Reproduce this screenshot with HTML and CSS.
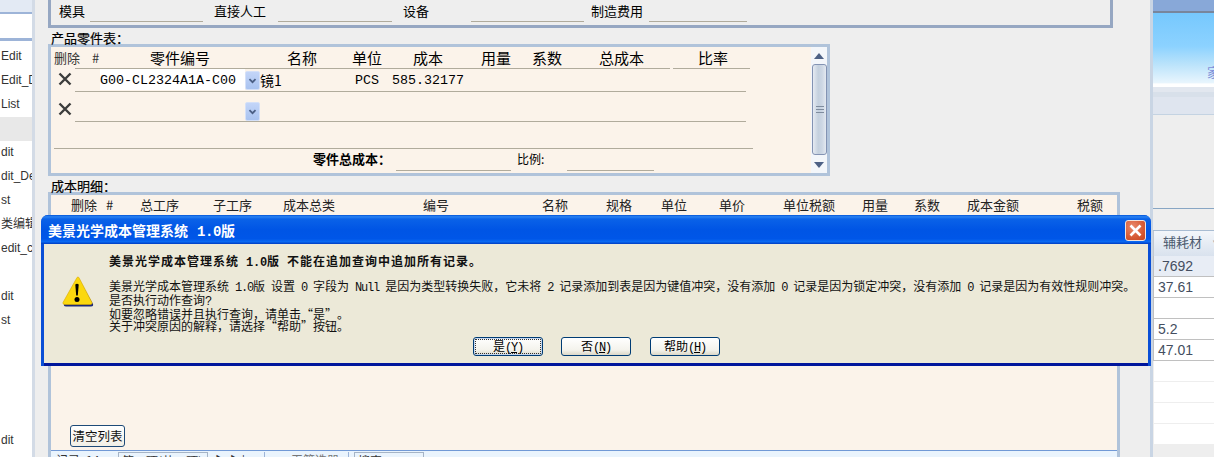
FILE: index.html
```html
<!DOCTYPE html>
<html lang="zh-CN">
<head>
<meta charset="utf-8">
<title>美景光学成本管理系统</title>
<link rel="stylesheet" href="styles.css">
</head>
<body>
<div class="page">
  <nav class="nav">
    <div class="nav-top"></div>
    <div class="nav-band"></div>
    <ul class="nav-list">
      <li>Edit</li><li>Edit_D</li><li>List</li><li class="sel"></li><li>dit</li><li>dit_De</li><li>st</li><li>类编辑</li><li>edit_c</li><li></li><li>dit</li><li>st</li><li></li><li></li><li></li><li></li><li>dit</li>
    </ul>
  </nav>

  <main class="main">
    <section class="cost-panel">
      <span>模具</span><i class="rule r1"></i>
      <span>直接人工</span><i class="rule r2"></i>
      <span>设备</span><i class="rule r3"></i>
      <span>制造费用</span><i class="rule"></i>
    </section>

    <h2 class="label">产品零件表：</h2>
    <section class="parts">
      <div class="parts-body">
        <div class="parts-head">
          <span class="small">删除</span><span class="small">#</span><span>零件编号</span><span>名称</span><span>单位</span><span>成本</span><span>用量</span><span>系数</span><span>总成本</span><span>比率</span>
        </div>
        <div class="head-rules"><i></i><i></i></div>
        <div class="part-row first">
          <svg class="del" viewBox="0 0 14 14"><path d="M1.5 1.5l11 11M12.5 1.5l-11 11"/></svg>
          <div class="cells">
            <span class="code">G00-CL2324A1A-C00</span>
            <span class="drop"><svg viewBox="0 0 15 19"><path d="M4 8l3.500 3.500L11 8"/></svg></span>
            <span class="name">镜1</span><span class="mono unit">PCS</span><span class="mono">585.32177</span>
          </div>
        </div>
        <div class="part-row second">
          <svg class="del" viewBox="0 0 14 14"><path d="M1.5 1.500l11 11M12.500 1.500l-11 11"/></svg>
          <div class="cells">
            <span class="code blank"></span>
            <span class="drop"><svg viewBox="0 0 15 19"><path d="M4 8l3.500 3.500L11 8"/></svg></span>
          </div>
        </div>
        <div class="parts-foot">
          <b>零件总成本：</b><i class="rule total"></i><span>比例:</span><i class="rule ratio"></i>
        </div>
      </div>
      <div class="scrollbar">
        <i class="up"></i>
        <div class="thumb"><span></span></div>
        <i class="down"></i>
      </div>
    </section>

    <h2 class="label">成本明细：</h2>
    <section class="detail">
      <div class="detail-head">
        <span>删除</span><span>#</span><span>总工序</span><span>子工序</span><span>成本总类</span><span>编号</span><span>名称</span><span>规格</span><span>单位</span><span>单价</span><span>单位税额</span><span>用量</span><span>系数</span><span>成本金额</span><span>税额</span>
      </div>
      <button class="clear">清空列表</button>
      <div class="status">
        <span class="st-rec">记录: 14</span><span class="st-box">第 1 项(共 1 项)</span><span class="st-nav">▶ ▶|</span>
        <span class="st-filter">无筛选器</span><span class="st-search">搜索</span>
      </div>
    </section>
  </main>

  <aside class="side">
    <div class="side-top"></div>
    <div class="sky"><span>家</span></div>
    <div class="side-band"></div>
    <div class="side-gap"></div>
    <div class="side-gap2"></div>
    <div class="grid-head">辅耗材<em>▾</em></div>
    <div class="cell shaded">.7692</div>
    <div class="cell">37.61</div>
    <div class="cell"></div>
    <div class="cell">5.2</div>
    <div class="cell">47.01</div>
    <div class="cell empty"></div>
    <div class="cell empty"></div>
    <div class="cell empty"></div>
    <div class="cell empty"></div>
  </aside>

  <div class="dialog" role="alertdialog">
    <header class="title">
      <span>美景光学成本管理系统<span class="tl"> 1.0</span>版</span>
      <button class="close" aria-label="关闭"><svg viewBox="0 0 19 19"><path d="M4.500 4.500l10 10M14.500 4.500l-10 10"/></svg></button>
    </header>
    <div class="dlg-body">
      <div class="msg">
        <svg class="warn" viewBox="0 0 32 32">
          <path class="warn-shadow" d="M16.500 2.500L31 28q.6 2.500-2 2.500H4q-2.600 0-2-2.500z"/>
          <path class="warn-fill" d="M15 1.500q.9-1 1.900 0L30 26.500q.5 2-1.500 2H2.500q-2 0-1.500-2z"/>
          <path class="warn-mark" d="M13.300 8.500q1.700-1.500 3.400 0L15.800 19.500h-1.600z"/>
          <circle class="warn-mark" cx="15" cy="23.500" r="2.500"/>
        </svg>
        <div class="msg-text">
          <p class="strong">美景光学成本管理系统<span class="l"> 1.0</span>版<span class="l"> </span>不能在追加查询中追加所有记录。</p>
          <p>美景光学成本管理系统<span class="l"> 1.0</span>版<span class="l"> </span>设置<span class="l"> 0 </span>字段为<span class="l"> Null </span>是因为类型转换失败，它未将<span class="l"> 2 </span>记录添加到表是因为键值冲突，没有添加<span class="l"> 0 </span>记录是因为锁定冲突，没有添加<span class="l"> 0 </span>记录是因为有效性规则冲突。</p>
          <p>是否执行动作查询<span class="l">?</span></p>
          <p>如要忽略错误并且执行查询，请单击<span class="ql">“</span>是<span class="qr">”</span>。</p>
          <p>关于冲突原因的解释，请选择<span class="ql">“</span>帮助<span class="qr">”</span>按钮。</p>
        </div>
      </div>
      <div class="actions">
        <button class="btn default"><span>是<span class="l">(<u>Y</u>)</span></span></button>
        <button class="btn"><span>否<span class="l">(<u>N</u>)</span></span></button>
        <button class="btn help"><span>帮助<span class="l">(<u>H</u>)</span></span></button>
      </div>
    </div>
  </div>
</div>
</body>
</html>
```
FILE: styles.css
```css
* { box-sizing: border-box; }
html, body { margin: 0; padding: 0; }
body {
  width: 1214px;
  height: 457px;
  overflow: hidden;
  background: #eeeeee;
  color: #000;
  font-family: "Noto Sans CJK SC", "Liberation Sans", sans-serif;
  font-size: 13px;
}
.page { position: relative; display: flex; width: 1214px; height: 457px; overflow: hidden; }
i, em { font-style: normal; }
h2, p, ul { margin: 0; padding: 0; }

/* left navigation */
.nav { width: 35px; flex: none; background: #fff; border-right: 3px solid #d3dbe6; overflow: hidden; }
.nav-top { height: 15px; background: #e3eaf4; border-bottom: 3px solid #9db4d8; }
.nav-band { height: 27px; background: #fff; border-bottom: 3px solid #9db4d8; margin-top: -1px; }
.nav-list { list-style: none; margin-top: 4px; }
.nav-list li { height: 24px; padding-left: 1px; font: 12px/22px "Liberation Sans", "Noto Sans CJK SC", sans-serif; color: #333; white-space: nowrap; }
.nav-list .sel { background: #e8e8e8; }

/* main column */
.main { width: 1115px; flex: none; padding-left: 13px; }
.cost-panel {
  display: grid;
  grid-template-columns: 31px 124px 64px 125px 68px 120px 58px 98px;
  align-items: start;
  width: 1065px;
  height: 28px;
  padding: 3px 0 0 8px;
  border: 3px solid #96a7c2;
  border-top: 0;
  line-height: 16px;
}
.cost-panel span { height: 19px; }
.rule { display: block; height: 19px; border-bottom: 1px solid #b0ab9c; }
.r1, .r2 { margin-right: 11px; }
.r3 { margin-right: 7px; }
.label { height: 16px; padding-left: 3px; font-size: 13px; font-weight: 400; line-height: 19px; -webkit-text-stroke: .2px #000; }

/* parts table */
.parts { display: flex; width: 782px; height: 132px; border: 3px solid #b0c3da; background: #fbf3ea; }
.parts-body { width: 760px; flex: none; }
.parts-head {
  display: grid;
  grid-template-columns: 38px 58px 137px 65px 61px 68px 51px 67px 99px 60px;
  align-items: center;
  height: 21px;
  padding-left: 3px;
  font-size: 15px;
  line-height: 20px;
}
.parts-head .small { font-size: 13px; color: #333; }
.head-rules { display: flex; gap: 3px; height: 1px; margin-left: 24px; }
.head-rules i { width: 595px; background: #b0ab9c; }
.head-rules i + i { width: 77px; }
.part-row { display: flex; }
.first { height: 23px; }
.second { height: 30px; }
.del { width: 14px; height: 14px; margin: 3px 3px 0 7px; flex: none; }
.second .del { margin-top: 10px; }
.del path { fill: none; stroke: #3c3c3c; stroke-width: 2.400; }
.cells {
  display: flex;
  align-items: flex-start;
  width: 671px;
  border-bottom: 1px solid #b0ab9c;
  font: 13.330px/24px "Liberation Mono", "Noto Sans CJK SC", monospace;
}
.code { width: 145px; height: 21px; margin: 0 0 0 25px; background: #fff; white-space: nowrap; }
.code.blank { background: transparent; }
.drop { width: 15px; height: 19px; margin-top: 2px; background: linear-gradient(#c3d5f8, #a9c3f0); border: 1px solid #d4e0f8; border-radius: 2px; }
.second .drop { margin-top: 10px; }
.drop svg { display: block; width: 13px; height: 17px; }
.drop path { fill: none; stroke: #4a5e84; stroke-width: 2; }
.name { width: 95px; height: 22px; font-family: "Noto Sans CJK SC", sans-serif; font-size: 14px; line-height: 22px; }
.unit { width: 37px; height: 22px; }
.mono { height: 22px; }
.parts-foot { display: flex; align-items: flex-start; height: 25px; margin: 26px 58px 0 3px; border-top: 1px solid #b0ab9c; padding-left: 259px; line-height: 19px; font-size: 13px; }
.parts-foot b { width: 83px; font-size: 13px; }
.parts-foot span { width: 50px; font-size: 12px; }
.parts-foot .rule { height: 22px; }
.total { width: 115px; margin-right: 6px; flex: none; }
.ratio { width: 87px; flex: none; }

.scrollbar { position: relative; display: flex; flex-direction: column; width: 16px; flex: none; background: #f3f6fa; }
.up, .down { display: block; width: 0; height: 0; margin-left: 3px; border: 5px solid transparent; border-top: 0; border-bottom: 6px solid #4d6185; margin-top: 6px; }
.down { border-bottom: 0; border-top: 6px solid #4d6185; margin-top: 7px; }
.thumb {
  display: flex; align-items: center; justify-content: center;
  width: 15px; height: 91px; margin: 5px 0 0 1px;
  border: 1px solid #8393b3; border-radius: 3px;
  background: linear-gradient(90deg, #e6ebf2, #c4d0de 40%, #cdd7e4 70%, #e4e9f0);
}
.thumb span { width: 8px; height: 7px; border-top: 1px solid #7f8c9e; border-bottom: 1px solid #7f8c9e; background: linear-gradient(transparent 2px, #7f8c9e 2px, #7f8c9e 3px, transparent 3px); }

/* detail table */
.detail { display: flex; flex-direction: column; width: 1072px; height: 265px; border: 3px solid #b0c3da; border-bottom: 0; background: #fbf3ea; }
.detail-head {
  display: grid;
  grid-template-columns: 35px 34px 73px 70px 140px 119px 64px 55px 58px 64px 79px 52px 53px 110px 40px;
  height: 20px;
  padding-left: 20px;
  line-height: 20px;
  color: #222;
}
.clear {
  width: 55px; height: 22px; margin: auto 0 3px 19px; padding: 0;
  border: 1px solid #1d4a78; border-radius: 3px;
  background: linear-gradient(#fff, #f1efe6);
  font: 12.500px/18px "Noto Sans CJK SC", sans-serif; color: #111;
}
.status { display: flex; height: 7px; overflow: hidden; border-top: 1px solid #7199d6; background: #eaf4fd; font-size: 12px; line-height: 16px; color: #333; padding: 1px 0 0 5px; }
.st-rec { width: 62px; flex: none; white-space: nowrap; }
.st-box { width: 90px; height: 19px; flex: none; border: 1px solid #a6b4c6; white-space: nowrap; overflow: hidden; padding-left: 3px; }
.st-nav { width: 57px; flex: none; padding-left: 7px; border-right: 1px solid #9db4d8; white-space: nowrap; }
.st-filter { width: 84px; flex: none; padding-left: 26px; color: #777; border-right: 1px solid #9db4d8; white-space: nowrap; }
.st-search { width: 70px; height: 19px; flex: none; margin-left: 5px; border: 1px solid #a6b4c6; padding-left: 3px; }

/* right panel */
.side { width: 64px; flex: none; border-left: 3px solid #c9d5e4; background: #eeeeee; overflow: hidden; }
.side-top { height: 13px; background: #88a8d8; border-bottom: 2px solid #78869c; }
.sky { height: 74px; padding-top: 52px; overflow: hidden; text-align: right; background: linear-gradient(#76c8fd, #8cd2ff 45%, #b8e2fb 68%, #e8f5fd 94%, #fff 96%, #fff); }
.sky span { display: block; margin-right: -6px; font-size: 13px; line-height: 14px; color: #7f8fd8; }
.side-band { height: 28px; background: linear-gradient(#e2e7ef 0, #e2e7ef 5px, #d8e0ea 5px, #d8e0ea 10px, #dfe5ef 10px, #dfe5ef 100%); border-bottom: 1px solid #c4d3e2; }
.side-gap { height: 94px; border-bottom: 1px solid #88a6c4; }
.side-gap2 { height: 22px; border-bottom: 1px solid #a8bcd2; }
.grid-head { height: 25px; padding-left: 9px; line-height: 22px; font-size: 13px; color: #4c5a6e; white-space: nowrap; background: linear-gradient(#f3f6fa, #d9e2ee); border-left: 1px solid #c2c8d0; }
.grid-head em { margin-left: 11px; color: #8a94a4; }
.cell { height: 21px; padding-left: 4px; font: 14px/20px "Liberation Sans", sans-serif; color: #444e60; background: #fff; border-left: 1px solid #c0c0c0; border-bottom: 1px solid #c0c0c0; }
.shaded { background: #e8edf5; }
.empty { border-left-color: #eee; border-bottom-color: #eee; }

/* modal dialog */
.dialog {
  position: absolute; left: 41px; top: 215px;
  display: flex; flex-direction: column;
  width: 1110px; height: 151px;
  border-radius: 7px 7px 0 0;
  background: #0a4fd6;
  overflow: hidden;
}
.title {
  display: flex; align-items: center; justify-content: space-between;
  height: 29px; padding: 0 5px 0 7px;
  background: linear-gradient(#0053d8 0, #2a82f2 6%, #0a62e8 14%, #0055e5 50%, #0056e8 82%, #0b6af2 92%, #003cc0 100%);
  color: #fff;
  font-size: 14px; font-weight: 700;
}
.tl { font-family: "Liberation Mono", monospace; font-weight: 700; letter-spacing: -.4px; margin-left: 1px; }
.close { width: 21px; height: 21px; padding: 0; margin-top: 1px; border: 1px solid #f2e4dc; border-radius: 3px; background: radial-gradient(circle at 35% 30%, #ea8a6c, #d65a34 60%, #c4431f); }
.close svg { display: block; width: 19px; height: 19px; }
.close path { fill: none; stroke: #fff; stroke-width: 2.600; }
.dlg-body { flex: 1; margin: 0 3px 3px; background: #ece9d8; box-shadow: 0 3px 0 #00169c; }
.msg { display: flex; height: 93px; }
.warn { width: 32px; height: 32px; margin: 32px 15px 0 18px; flex: none; }
.warn-shadow { fill: #1c2a78; }
.warn-fill { fill: #fbd80e; stroke: #d8a800; stroke-width: .6; }
.warn-mark { fill: #000; }
.msg-text { font-size: 12px; line-height: 12px; white-space: nowrap; color: #111; padding-top: 36px; }
.strong { height: 14px; margin: -26px 0 12px; font-size: 12px; line-height: 14px; font-weight: 700; letter-spacing: 1px; }
.strong .l { letter-spacing: -.2px; font-weight: 700; }
.l { font-family: "Liberation Mono", monospace; letter-spacing: -1.200px; }
.ql, .qr { display: inline-block; width: 12px; }
.ql { text-align: right; }
.qr { text-align: left; }
.actions { display: flex; gap: 18px; padding-left: 429px; }
.btn {
  width: 70px; height: 19px; padding: 0;
  border: 1px solid #003c74; border-radius: 3px;
  background: linear-gradient(#fff, #f4f3ec 70%, #dcd8c8);
  font: 12px/14px "Noto Sans CJK SC", sans-serif; color: #000;
}
.btn > span { display: block; height: 15px; }
.default { box-shadow: inset 0 0 0 1px #c5d6ef; }
.default > span { margin: 1px; border: 1px dotted #333; line-height: 12px; height: 15px; }
.help { margin-left: 1px; }
```
